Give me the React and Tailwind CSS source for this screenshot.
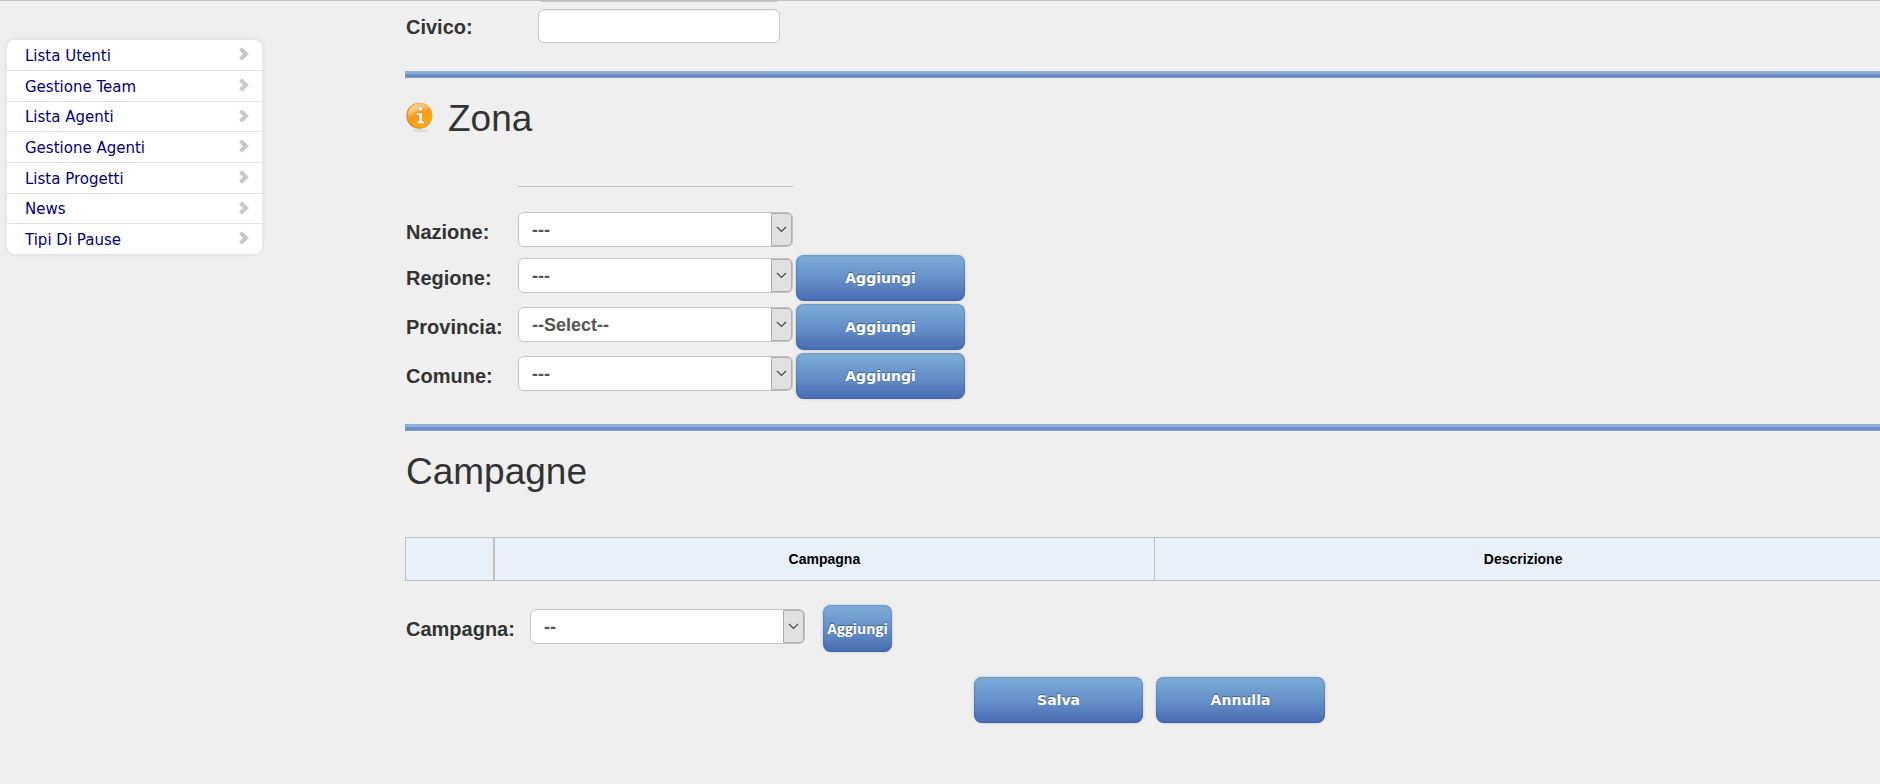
import { useState } from "react";
import clsx from "clsx";

const menu = [
  "Lista Utenti",
  "Gestione Team",
  "Lista Agenti",
  "Gestione Agenti",
  "Lista Progetti",
  "News",
  "Tipi Di Pause",
];

const zone = [
  { id: "nazione", label: "Nazione:", empty: "---", add: false },
  { id: "regione", label: "Regione:", empty: "---", add: true },
  { id: "provincia", label: "Provincia:", empty: "--Select--", add: true },
  { id: "comune", label: "Comune:", empty: "---", add: true },
];

function Sidebar() {
  return (
    <nav className="ml-[7px] mt-[39px] w-[255px] shrink-0 self-start overflow-hidden rounded-lg bg-white font-['DejaVu_Sans',Verdana,sans-serif] text-[15px] shadow-[0_0_5px_rgba(0,0,0,0.1)]">
      <ul className="divide-y divide-[#e2e2e2]">
        {menu.map((item) => (
          <li key={item} className="h-[31px] nth-[3n]:h-[30px] last:h-[30px]">
            <a
              href="#"
              className="flex h-full items-center justify-between pl-[18px] pr-[13px] pt-0.5 text-[#000080]">
              {item}
              <svg width="10" height="14" viewBox="0 0 10 14" fill="none" className="mb-1">
                <path
                  d="M1.5 1.7 7 7l-5.500 5.300"
                  stroke="#c9c9c9"
                  strokeWidth="4"
                />
              </svg>
            </a>
          </li>
        ))}
      </ul>
    </nav>
  );
}

function Divider() {
  return (
    <hr className="h-[7px] border-0 bg-[linear-gradient(#8eabd3_0,#93afd6_3px,#7d9dcc_3px,#668cc5_4px,#668cc5_6px,#7f9fce_6px)]" />
  );
}

function Button({ children, small }) {
  return (
    <button
      type="button"
      className={clsx(
        "shrink-0 rounded-lg bg-linear-to-b from-[#7eaed9] via-[#6691c9] to-[#486cb2] text-sm font-bold text-white shadow-[0_0_3px_rgba(0,0,0,0.2),inset_0_0_2px_rgba(30,60,120,0.6)] [text-shadow:0_-1px_1px_rgba(0,0,0,0.4)]",
        small
          ? "h-[47px] w-[69px] font-['Open_Sans',sans-serif]"
          : "h-[46px] w-[169px] font-['DejaVu_Sans',Verdana,sans-serif]"
      )}>
      {children}
    </button>
  );
}

function Select({ id, empty }) {
  return (
    <div className="relative mb-[5px] h-[35px] w-[275px] shrink-0">
      <select
        id={id}
        className="h-full w-full appearance-none rounded-md border border-[#c4c4c4] bg-white pl-[13px] pr-6 pt-px text-lg/6 font-bold text-[#555]">
        <option>{empty}</option>
      </select>
      <span className="pointer-events-none absolute inset-y-px right-px flex w-[21px] items-center justify-center rounded-r-[4px] border border-[#adadad] bg-[#e1e1e1]">
        <svg width="11" height="7" viewBox="0 0 11 7" fill="none">
          <path d="M1 1l4.500 4.500L10 1" stroke="#444" strokeWidth="1.200" />
        </svg>
      </span>
    </div>
  );
}

function InfoIcon() {
  return (
    <svg width="27" height="31" viewBox="0 0 27 31" className="mb-1">
      <defs>
        <linearGradient id="orange" x1="0.2" y1="0" x2="0.7" y2="1">
          <stop offset="0" stopColor="#fcd08c" />
          <stop offset="0.5" stopColor="#fb9a16" />
          <stop offset="1" stopColor="#ffb00c" />
        </linearGradient>
      </defs>
      <ellipse cx="14" cy="28.500" rx="8" ry="1.800" fill="#dcdcdc" />
      <circle cx="13.300" cy="13.700" r="13" fill="#d68b35" />
      <circle cx="13.900" cy="13.200" r="12.300" fill="url(#orange)" />
      <path
        d="M2.500 14C2.500 7 7.500 2 14 2c4 0 7 1.500 9 4.500-8 0-15 2-20.500 7.500z"
        fill="#fff"
        opacity="0.25"
      />
      <g fill="#fff5e2" stroke="#b9772a" strokeWidth="0.5">
        <circle cx="14.500" cy="6.500" r="2.500" />
        <path d="M10.500 10.800h5.800v8.300h2v2.700h-7.100v-2.700h1.700v-5.600h-2.400z" />
      </g>
    </svg>
  );
}

export default function App() {
  const [civico, setCivico] = useState("");

  return (
    <div className="flex min-h-screen overflow-x-hidden border-t border-[#bfbfbf] bg-[#efefef] font-['Liberation_Sans',Arial,sans-serif] text-[#333]">
      <Sidebar />

      {/* the form is a bit wider than the window */}
      <main className="-mr-3 ml-[143px] min-w-0 flex-1">
        <div className="ml-[136px] h-px w-[236px] bg-[#c4c4c4]" />
        <div className="mt-[7px] flex items-center">
          <label htmlFor="civico" className="w-[133px] pl-px pt-0.5 text-xl/6 font-bold">
            Civico:
          </label>
          <input
            id="civico"
            value={civico}
            onChange={(e) => setCivico(e.target.value)}
            className="h-[34px] w-[242px] rounded-md border border-[#c8c8c8] bg-white px-3 text-lg shadow-[inset_0_1px_1px_rgba(0,0,0,0.07)]"
          />
        </div>

        <div className="mt-7">
          <Divider />
        </div>

        {/* zona */}
        <section className="pt-[21px]">
          <h2 className="flex items-center gap-[15px] border-b border-[#ebebeb] pb-[7px] pl-px text-[37px]/[40px]">
            <InfoIcon />
            Zona
          </h2>
          <hr className="ml-[113px] mt-[39px] w-[275px] border-[#c0c0c0]" />
          <div className="mt-[25px] flex flex-col gap-[3px]">
            {zone.map((z) => (
              <div key={z.id} className="flex items-center">
                <label htmlFor={z.id} className="w-[113px] pl-px text-xl/6 font-bold">
                  {z.label}
                </label>
                <Select id={z.id} empty={z.empty} />
                {z.add && (
                  <div className="ml-[3px] flex">
                    <Button>Aggiungi</Button>
                  </div>
                )}
              </div>
            ))}
          </div>
        </section>

        <div className="mt-[25px]">
          <Divider />
        </div>

        {/* campagne */}
        <section className="pt-[21px]">
          <h2 className="border-b border-[#ebebeb] pb-[7px] pl-px text-[37px]/[40px]">
            Campagne
          </h2>
          <table className="mt-[37px] w-full table-fixed border-collapse bg-[#e8eff7] text-[14px] text-black">
            <thead>
              <tr className="h-[43px] *:border *:border-[#bfbfbf]">
                <th className="w-[88px] border-r-2!" aria-label="Azioni"></th>
                <th className="w-[44.5%]">Campagna</th>
                <th>Descrizione</th>
              </tr>
            </thead>
          </table>
          <div className="mt-6 flex items-center">
            <label htmlFor="campagna" className="w-[125px] pl-px text-xl/6 font-bold">
              Campagna:
            </label>
            <Select id="campagna" empty="--" />
            <div className="ml-[18px] flex">
              <Button small>Aggiungi</Button>
            </div>
          </div>
        </section>

        <div className="mt-[25px] flex justify-center gap-[13px] pl-0.5">
          <Button>Salva</Button>
          <Button>Annulla</Button>
        </div>
      </main>
    </div>
  );
}
